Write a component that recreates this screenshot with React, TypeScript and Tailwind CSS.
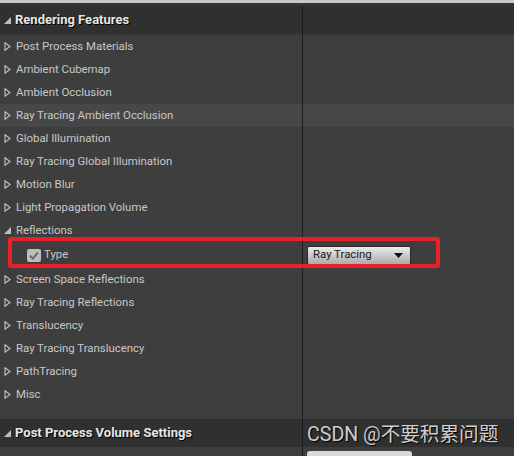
import React from "react";

const groups = [
  "Post Process Materials",
  "Ambient Cubemap",
  "Ambient Occlusion",
  "Ray Tracing Ambient Occlusion",
  "Global Illumination",
  "Ray Tracing Global Illumination",
  "Motion Blur",
  "Light Propagation Volume",
];

const afterGroups = [
  "Screen Space Reflections",
  "Ray Tracing Reflections",
  "Translucency",
  "Ray Tracing Translucency",
  "PathTracing",
  "Misc",
];

function Collapsed() {
  return (
    <svg width="7" height="9" viewBox="0 0 7 9" className="shrink-0">
      <path d="M1 0.8 L6 4.5 L1 8.2 Z" fill="none" stroke="#c4c4c4" strokeWidth="1.1" />
    </svg>
  );
}

function Expanded() {
  return (
    <svg width="7" height="7" viewBox="0 0 7 7" className="shrink-0">
      <path d="M7 0 L7 7 L0 7 Z" fill="#bdbdbd" />
    </svg>
  );
}

function Row({ label, hover }: { label: string; hover?: boolean }) {
  return (
    <div className={`flex h-[23px] ${hover ? "bg-[#474747]" : "bg-[#3e3e3e]"}`}>
      <div className="flex w-[303px] items-center gap-[5px] border-r border-[#1c1c1c] pl-[4px]">
        <Collapsed />
        <span>{label}</span>
      </div>
      <div className="flex-1" />
    </div>
  );
}

function Header({ label }: { label: string }) {
  return (
    <div className="flex h-[28px] bg-[#303030]">
      <div className="flex w-[303px] items-center gap-[4px] border-r border-[#1c1c1c] pl-[4px]">
        <Expanded />
        <span className="text-[13px] font-bold text-[#e6e6e6] [text-shadow:1px_1px_0_#000]">{label}</span>
      </div>
      <div className="flex-1" />
    </div>
  );
}

export default function App() {
  return (
    <div
      className="relative h-[456px] w-[514px] overflow-hidden bg-[#3e3e3e] text-[11.4px] text-[#c8c8c8]"
      style={{ fontFamily: "Roboto, 'Noto Sans CJK SC', sans-serif" }}
    >
      <div className="h-[3px] bg-[#c9c9c9]" />
      <div className="h-[3px] bg-[#363636]" />
      <Header label="Rendering Features" />
      <div className="flex h-[1px] bg-[#3a3a3a]">
        <div className="w-[303px] border-r border-[#1c1c1c]" />
      </div>
      {groups.map((g) => (
        <Row key={g} label={g} hover={g === "Ray Tracing Ambient Occlusion"} />
      ))}

      {/* Reflections, expanded */}
      <div className="flex h-[23px] bg-[#3e3e3e]">
        <div className="flex w-[303px] items-center gap-[5px] border-r border-[#1c1c1c] pl-[4px]">
          <Expanded />
          <span>Reflections</span>
        </div>
        <div className="flex-1" />
      </div>
      <div className="flex h-[26px] bg-[#3e3e3e]">
        <div className="flex w-[303px] items-center gap-[3px] border-r border-[#1c1c1c] pl-[27px]">
          <div className="flex h-[13px] w-[14px] items-center justify-center rounded-[2px] bg-[#bdbdbd]">
            <svg width="10" height="9" viewBox="0 0 10 9">
              <path d="M1 4.8 L3.8 7.6 L9 1.4" fill="none" stroke="#6a6a6a" strokeWidth="2" />
            </svg>
          </div>
          <span>Type</span>
        </div>
        <div className="flex flex-1 items-center pl-[4px]">
          <div className="flex h-[19px] w-[104px] items-center justify-between rounded-[2px] border border-[#2b2b2b] bg-gradient-to-b from-[#ececec] to-[#ababab] pl-[5px] pr-[7px] text-[#1a1a1a]">
            <span>Ray Tracing</span>
            <svg width="9" height="5" viewBox="0 0 9 5">
              <path d="M0 0 L9 0 L4.5 5 Z" fill="#111" />
            </svg>
          </div>
        </div>
      </div>

      {afterGroups.map((g) => (
        <Row key={g} label={g} />
      ))}
      <div className="flex h-[13px]">
        <div className="w-[303px] border-r border-[#1c1c1c]" />
      </div>
      <Header label="Post Process Volume Settings" />
      <div className="flex h-[9px]">
        <div className="w-[303px] border-r border-[#1c1c1c]" />
        <div className="flex-1 pl-[4px] pt-[4px]">
          <div className="h-[10px] w-[105px] rounded-t-[3px] bg-[#d9d9d9]" />
        </div>
      </div>

      {/* red annotation */}
      <div className="pointer-events-none absolute left-[8px] top-[237px] h-[31px] w-[432px] rounded-[3px] border-[4px] border-[#e8202c]" />

      {/* watermark */}
      <div className="pointer-events-none absolute left-[307px] top-[423px] text-[19.6px] leading-[24px] text-[#cfcfcf] [text-shadow:1px_1px_1px_#000]">
        CSDN @不要积累问题
      </div>
    </div>
  );
}
